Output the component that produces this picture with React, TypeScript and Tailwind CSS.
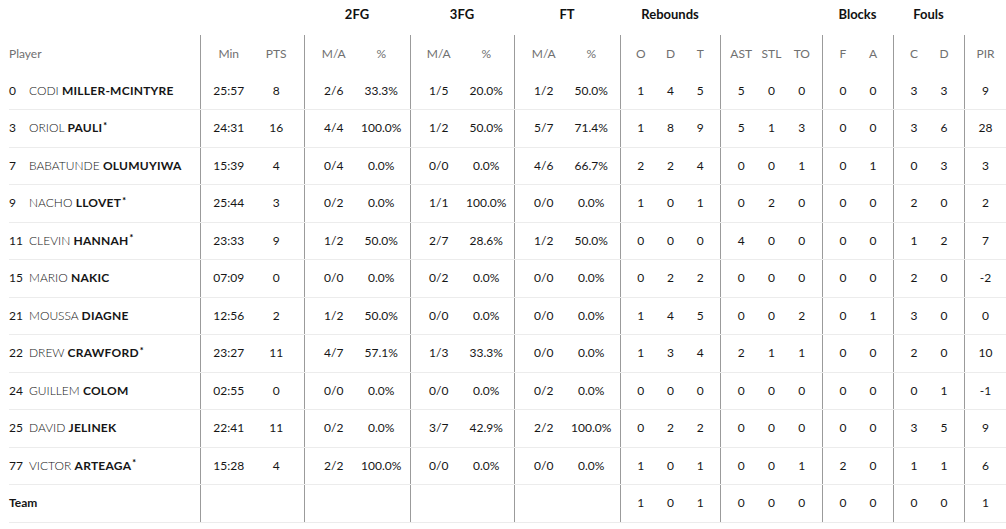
import React from "react";

type Row = {
  no?: string;
  first?: string;
  last: string;
  star?: boolean;
  team?: boolean;
  min?: string;
  pts?: string;
  fg2?: [string, string];
  fg3?: [string, string];
  ft?: [string, string];
  reb: [string, string, string];
  misc: [string, string, string];
  blk: [string, string];
  fouls: [string, string];
  pir: string;
};

const rows: Row[] = [
  { no: "0", first: "CODI", last: "MILLER-MCINTYRE", min: "25:57", pts: "8", fg2: ["2/6", "33.3%"], fg3: ["1/5", "20.0%"], ft: ["1/2", "50.0%"], reb: ["1", "4", "5"], misc: ["5", "0", "0"], blk: ["0", "0"], fouls: ["3", "3"], pir: "9" },
  { no: "3", first: "ORIOL", last: "PAULI", star: true, min: "24:31", pts: "16", fg2: ["4/4", "100.0%"], fg3: ["1/2", "50.0%"], ft: ["5/7", "71.4%"], reb: ["1", "8", "9"], misc: ["5", "1", "3"], blk: ["0", "0"], fouls: ["3", "6"], pir: "28" },
  { no: "7", first: "BABATUNDE", last: "OLUMUYIWA", min: "15:39", pts: "4", fg2: ["0/4", "0.0%"], fg3: ["0/0", "0.0%"], ft: ["4/6", "66.7%"], reb: ["2", "2", "4"], misc: ["0", "0", "1"], blk: ["0", "1"], fouls: ["0", "3"], pir: "3" },
  { no: "9", first: "NACHO", last: "LLOVET", star: true, min: "25:44", pts: "3", fg2: ["0/2", "0.0%"], fg3: ["1/1", "100.0%"], ft: ["0/0", "0.0%"], reb: ["1", "0", "1"], misc: ["0", "2", "0"], blk: ["0", "0"], fouls: ["2", "0"], pir: "2" },
  { no: "11", first: "CLEVIN", last: "HANNAH", star: true, min: "23:33", pts: "9", fg2: ["1/2", "50.0%"], fg3: ["2/7", "28.6%"], ft: ["1/2", "50.0%"], reb: ["0", "0", "0"], misc: ["4", "0", "0"], blk: ["0", "0"], fouls: ["1", "2"], pir: "7" },
  { no: "15", first: "MARIO", last: "NAKIC", min: "07:09", pts: "0", fg2: ["0/0", "0.0%"], fg3: ["0/2", "0.0%"], ft: ["0/0", "0.0%"], reb: ["0", "2", "2"], misc: ["0", "0", "0"], blk: ["0", "0"], fouls: ["2", "0"], pir: "-2" },
  { no: "21", first: "MOUSSA", last: "DIAGNE", min: "12:56", pts: "2", fg2: ["1/2", "50.0%"], fg3: ["0/0", "0.0%"], ft: ["0/0", "0.0%"], reb: ["1", "4", "5"], misc: ["0", "0", "2"], blk: ["0", "1"], fouls: ["3", "0"], pir: "0" },
  { no: "22", first: "DREW", last: "CRAWFORD", star: true, min: "23:27", pts: "11", fg2: ["4/7", "57.1%"], fg3: ["1/3", "33.3%"], ft: ["0/0", "0.0%"], reb: ["1", "3", "4"], misc: ["2", "1", "1"], blk: ["0", "0"], fouls: ["2", "0"], pir: "10" },
  { no: "24", first: "GUILLEM", last: "COLOM", min: "02:55", pts: "0", fg2: ["0/0", "0.0%"], fg3: ["0/0", "0.0%"], ft: ["0/2", "0.0%"], reb: ["0", "0", "0"], misc: ["0", "0", "0"], blk: ["0", "0"], fouls: ["0", "1"], pir: "-1" },
  { no: "25", first: "DAVID", last: "JELINEK", min: "22:41", pts: "11", fg2: ["0/2", "0.0%"], fg3: ["3/7", "42.9%"], ft: ["2/2", "100.0%"], reb: ["0", "2", "2"], misc: ["0", "0", "0"], blk: ["0", "0"], fouls: ["3", "5"], pir: "9" },
  { no: "77", first: "VICTOR", last: "ARTEAGA", star: true, min: "15:28", pts: "4", fg2: ["2/2", "100.0%"], fg3: ["0/0", "0.0%"], ft: ["0/0", "0.0%"], reb: ["1", "0", "1"], misc: ["0", "0", "1"], blk: ["2", "0"], fouls: ["1", "1"], pir: "6" },
  { last: "Team", team: true, reb: ["1", "0", "1"], misc: ["0", "0", "0"], blk: ["0", "0"], fouls: ["0", "0"], pir: "1" },
];

function Group({ w, px, cells, header }: { w: string; px: string; cells: (string | undefined)[]; header?: boolean }) {
  return (
    <div className={`${w} ${px} flex h-full shrink-0 border-l border-[#9b9b9b]`}>
      {cells.map((c, i) => (
        <div
          key={i}
          className={`flex-1 flex items-center justify-center whitespace-nowrap ${header ? "text-[#707070]" : "text-[#161616]"}`}
        >
          {c ?? ""}
        </div>
      ))}
    </div>
  );
}

function Line({ r, header }: { r?: Row; header?: boolean }) {
  const h = header;
  return (
    <div className={`flex h-[37.5px] ${h ? "" : "border-b border-[#ececec]"} ml-[9px]`}>
      <div className="w-[191px] shrink-0 flex items-center whitespace-nowrap">
        {h ? (
          <span className="text-[#707070]">Player</span>
        ) : r!.team ? (
          <span className="font-bold text-[#161616]">Team</span>
        ) : (
          <>
            <span className="w-[20px] shrink-0 text-[#161616]">{r!.no}</span>
            <span className="font-light text-[#161616]">{r!.first}&nbsp;</span>
            <span className="font-bold text-[#161616] tracking-[0.02em]">{r!.last}</span>
            {r!.star && <span className="font-bold text-[9px] -translate-y-[3px] ml-[1px]">*</span>}
          </>
        )}
      </div>
      <Group header={h} w="w-[104px]" px="px-[4px]" cells={h ? ["Min", "PTS"] : [r!.min, r!.pts]} />
      <Group header={h} w="w-[106px]" px="px-[5px]" cells={h ? ["M/A", "%"] : [r!.fg2?.[0], r!.fg2?.[1]]} />
      <Group header={h} w="w-[104px]" px="px-[4px]" cells={h ? ["M/A", "%"] : [r!.fg3?.[0], r!.fg3?.[1]]} />
      <Group header={h} w="w-[106px]" px="px-[5px]" cells={h ? ["M/A", "%"] : [r!.ft?.[0], r!.ft?.[1]]} />
      <Group header={h} w="w-[100px]" px="px-[5px]" cells={h ? ["O", "D", "T"] : r!.reb} />
      <Group header={h} w="w-[102px]" px="px-[5px]" cells={h ? ["AST", "STL", "TO"] : r!.misc} />
      <Group header={h} w="w-[71px]" px="px-[5px]" cells={h ? ["F", "A"] : r!.blk} />
      <Group header={h} w="w-[71px]" px="px-[5px]" cells={h ? ["C", "D"] : r!.fouls} />
      <Group header={h} w="w-[42px]" px="px-0" cells={h ? ["PIR"] : [r!.pir]} />
    </div>
  );
}

export default function App() {
  return (
    <div className="w-[1006px] h-[529px] overflow-hidden bg-white text-[12px]" style={{ fontFamily: "Lato, 'Noto Sans', sans-serif" }}>
      <div className="flex h-[35px] items-center pb-[6px] font-bold text-[13px] text-[#111]">
        <div className="w-[304px] shrink-0" />
        <div className="w-[106px] shrink-0 text-center">2FG</div>
        <div className="w-[104px] shrink-0 text-center">3FG</div>
        <div className="w-[106px] shrink-0 text-center">FT</div>
        <div className="w-[100px] shrink-0 text-center">Rebounds</div>
        <div className="w-[102px] shrink-0" />
        <div className="w-[71px] shrink-0 text-center">Blocks</div>
        <div className="w-[71px] shrink-0 text-center">Fouls</div>
        <div className="w-[42px] shrink-0" />
      </div>
      <Line header />
      {rows.map((r, i) => (
        <Line key={i} r={r} />
      ))}
    </div>
  );
}
